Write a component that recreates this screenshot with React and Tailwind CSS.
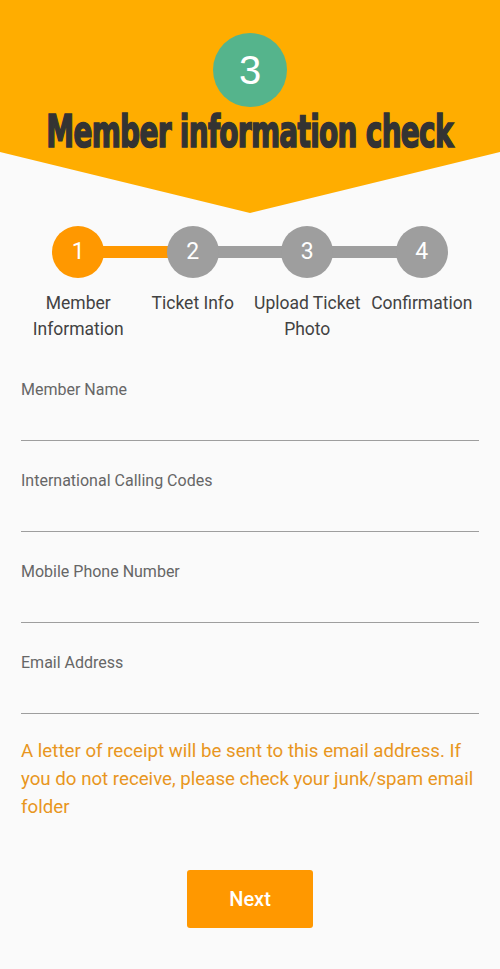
import React from "react";

const steps = [
  { n: "1", label: ["Member", "Information"], active: true },
  { n: "2", label: ["Ticket Info"] },
  { n: "3", label: ["Upload Ticket", "Photo"] },
  { n: "4", label: ["Confirmation"] },
];

const fields = [
  "Member Name",
  "International Calling Codes",
  "Mobile Phone Number",
  "Email Address",
];

export default function App() {
  return (
    <div className="min-h-[969px] w-[500px] bg-[#fafafa] font-['Roboto',sans-serif]">
      <div className="h-[213px] bg-[#ffad00] [clip-path:polygon(0_0,100%_0,100%_152px,50%_213px,0_152px)] flex flex-col items-center pt-[33px]">
        <div className="w-[74px] h-[74px] rounded-full bg-[#55b48c] flex items-center justify-center text-white text-[40px] leading-none font-['Liberation_Sans',sans-serif]">
          3
        </div>
        <div className="mt-[1px] text-[#333333] text-[45px] leading-[48px] font-bold font-['DejaVu_Sans_Condensed','DejaVu_Sans',sans-serif] scale-x-[0.69] whitespace-nowrap tracking-[-1px] [-webkit-text-stroke:1.6px_#333333]">
          Member information check
        </div>
      </div>

      <div className="px-[21px] mt-[13px]">
        <div className="relative grid grid-cols-4">
          <div className="absolute top-[20px] h-[12px] left-[57px] right-[57px] bg-[#9e9e9e]" />
          <div className="absolute top-[20px] h-[12px] left-[57px] w-[115px] bg-[#ff9800]" />
          {steps.map((s) => (
            <div key={s.n} className="relative flex flex-col items-center">
              <div
                className={
                  "w-[52px] h-[52px] rounded-full flex items-center justify-center text-white text-[23px] " +
                  (s.active ? "bg-[#ff9800]" : "bg-[#9e9e9e]")
                }
              >
                {s.n}
              </div>
              <div className="mt-[12px] text-center text-[#424242] text-[17.5px] leading-[26px] whitespace-nowrap">
                {s.label.map((l) => (
                  <div key={l}>{l}</div>
                ))}
              </div>
            </div>
          ))}
        </div>

        <div className="mt-[38px] flex flex-col gap-[30px]">
          {fields.map((f) => (
            <div key={f} className="h-[61px] border-b border-[#9e9e9e] text-[16px] leading-[20px] text-[#666666]">
              {f}
            </div>
          ))}
        </div>

        <p className="mt-[23px] text-[18.7px] leading-[28px] text-[#e8961e]">
          A letter of receipt will be sent to this email address. If you do not receive, please check your junk/spam email folder
        </p>

        <div className="flex justify-center mt-[49px]">
          <button className="w-[126px] h-[58px] rounded-[3px] bg-[#ff9800] text-white text-[20px] font-medium">
            Next
          </button>
        </div>
      </div>
    </div>
  );
}
